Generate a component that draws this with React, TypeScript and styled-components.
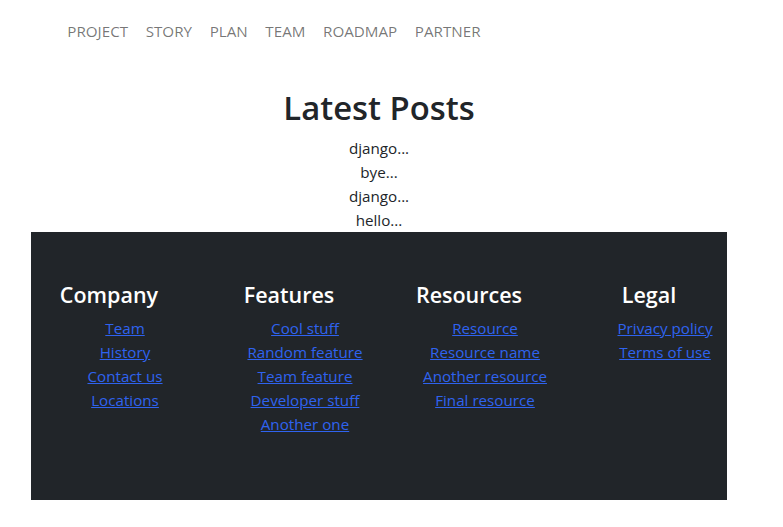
import React from "react";
import styled, { createGlobalStyle } from "styled-components";

const GlobalStyle = createGlobalStyle`
  body {
    margin: 0;
    font-family: "Open Sans", "Noto Sans", sans-serif;
    font-size: 15.2px;
    line-height: 24px;
    color: #212529;
    background: #fff;
  }
`;

const Page = styled.div`
  width: 696px;
  margin-left: 31px;
`;

const Navbar = styled.nav`
  display: flex;
  align-items: center;
  padding: 11px 0 8px 27.5px;
`;

const NavLink = styled.a`
  padding: 8px 8.8px;
  font-size: 15.2px;
  text-transform: uppercase;
  color: rgba(0, 0, 0, 0.55);
  text-decoration: none;
`;

const Posts = styled.section`
  padding-top: 29px;
  text-align: center;
`;

const Title = styled.h1`
  margin: 0 0 8px;
  font-size: 32.8px;
  font-weight: 600;
  line-height: 40px;
`;

const Post = styled.p`
  margin: 0;
`;

const Footer = styled.footer`
  background: #212529;
  padding: 49px 0 48px;
`;

const Row = styled.div`
  display: grid;
  grid-template-columns: repeat(4, 180px);
  margin: 0 -12px;
`;

const Col = styled.div`
  padding: 0 12px;
  text-align: center;
`;

const ColTitle = styled.h4`
  margin: 0 0 8px;
  font-size: 21.5px;
  font-weight: 600;
  line-height: 27px;
  color: #fff;
`;

const LinkList = styled.ul`
  list-style: none;
  margin: 0 0 16px;
  padding-left: 32px;
  white-space: nowrap;
`;

const FootLink = styled.a`
  color: #2f63ef;
  text-decoration: underline;
`;

const navItems = ["Project", "Story", "Plan", "Team", "Roadmap", "Partner"];
const posts = ["django...", "bye...", "django...", "hello..."];

const columns = [
  { title: "Company", links: ["Team", "History", "Contact us", "Locations"] },
  {
    title: "Features",
    links: ["Cool stuff", "Random feature", "Team feature", "Developer stuff", "Another one"],
  },
  {
    title: "Resources",
    links: ["Resource", "Resource name", "Another resource", "Final resource"],
  },
  { title: "Legal", links: ["Privacy policy", "Terms of use"] },
];

export default function App() {
  return (
    <>
      <GlobalStyle />
      <Page>
        <Navbar>
          {navItems.map(item => (
            <NavLink key={item} href="#">
              {item}
            </NavLink>
          ))}
        </Navbar>

        <Posts>
          <Title>Latest Posts</Title>
          {posts.map((p, i) => (
            <Post key={i}>{p}</Post>
          ))}
        </Posts>

        <Footer>
          <Row>
            {columns.map(col => (
              <Col key={col.title}>
                <ColTitle>{col.title}</ColTitle>
                <LinkList>
                  {col.links.map(l => (
                    <li key={l}>
                      <FootLink href="#">{l}</FootLink>
                    </li>
                  ))}
                </LinkList>
              </Col>
            ))}
          </Row>
        </Footer>
      </Page>
    </>
  );
}
